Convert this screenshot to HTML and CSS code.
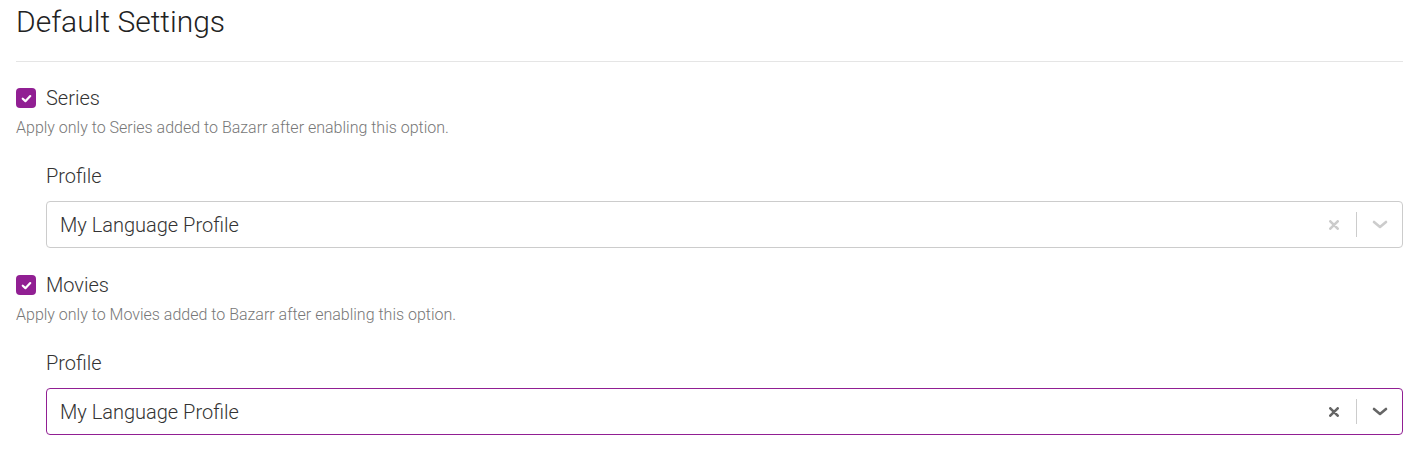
FILE: index.html
```html
<!DOCTYPE html>
<html lang="en">
<head>
<meta charset="utf-8">
<title>Default Settings</title>
<link rel="stylesheet" href="styles.css">
</head>
<body>
<main class="page">
  <header class="header">
    <h1 class="title">Default Settings</h1>
  </header>

  <section class="group">
    <label class="check-row">
      <span class="checkbox">
        <svg viewBox="0 0 10 10" width="11" height="11"><path d="M1.6 5.2 L4 7.4 L8.4 2.8" fill="none" stroke="#fff" stroke-width="2" stroke-linecap="round" stroke-linejoin="round"/></svg>
      </span>
      <span class="check-label">Series</span>
    </label>
    <p class="desc">Apply only to Series added to Bazarr after enabling this option.</p>
    <div class="field">
      <div class="field-label">Profile</div>
      <div class="select">
        <span class="select-value">My Language Profile</span>
        <span class="indicators">
          <span class="ind">
            <svg viewBox="0 0 10 10" width="10" height="10"><path d="M1.3 1.3 L8.7 8.7 M8.7 1.3 L1.3 8.7" stroke="currentColor" stroke-width="2.6" stroke-linecap="round"/></svg>
          </span>
          <span class="sep"></span>
          <span class="ind">
            <svg viewBox="0 0 16 9" width="16" height="9"><path d="M2 2 L8 7 L14 2" fill="none" stroke="currentColor" stroke-width="2.6" stroke-linecap="round" stroke-linejoin="round"/></svg>
          </span>
        </span>
      </div>
    </div>
  </section>

  <section class="group">
    <label class="check-row">
      <span class="checkbox">
        <svg viewBox="0 0 10 10" width="11" height="11"><path d="M1.6 5.2 L4 7.4 L8.4 2.8" fill="none" stroke="#fff" stroke-width="2" stroke-linecap="round" stroke-linejoin="round"/></svg>
      </span>
      <span class="check-label">Movies</span>
    </label>
    <p class="desc">Apply only to Movies added to Bazarr after enabling this option.</p>
    <div class="field">
      <div class="field-label">Profile</div>
      <div class="select focused">
        <span class="select-value">My Language Profile</span>
        <span class="indicators">
          <span class="ind">
            <svg viewBox="0 0 10 10" width="10" height="10"><path d="M1.3 1.3 L8.7 8.7 M8.7 1.3 L1.3 8.7" stroke="currentColor" stroke-width="2.6" stroke-linecap="round"/></svg>
          </span>
          <span class="sep"></span>
          <span class="ind">
            <svg viewBox="0 0 16 9" width="16" height="9"><path d="M2 2 L8 7 L14 2" fill="none" stroke="currentColor" stroke-width="2.6" stroke-linecap="round" stroke-linejoin="round"/></svg>
          </span>
        </span>
      </div>
    </div>
  </section>
</main>
</body>
</html>
```

FILE: styles.css
```css
* { box-sizing: border-box; }

html, body {
  margin: 0;
  background: #fff;
}

body {
  font-family: Roboto, "Liberation Sans", sans-serif;
  font-weight: 300;
  color: #333;
}

.page {
  padding: 0 17px 0 16px;
}

.header {
  padding-top: 4px;
  padding-bottom: 21px;
  border-bottom: 1px solid #e5e5e5;
}

.title {
  margin: 0;
  font-size: 30px;
  line-height: 36px;
  font-weight: 300;
  color: #222;
}

.group {
  display: flex;
  flex-direction: column;
}

.group:first-of-type { margin-top: 24px; }
.group + .group { margin-top: 25px; }

.check-row {
  display: flex;
  align-items: center;
  height: 24px;
  gap: 10px;
}

.checkbox {
  width: 20px;
  height: 20px;
  border-radius: 4px;
  background: #911f93;
  display: flex;
  align-items: center;
  justify-content: center;
}

.check-label {
  font-size: 20px;
  line-height: 24px;
  color: #333;
}

.desc {
  margin: 7px 0 0;
  font-size: 16px;
  line-height: 22px;
  color: #777;
}

.field {
  padding-left: 30px;
  margin-top: 24px;
  display: flex;
  flex-direction: column;
  gap: 12px;
}

.field-label {
  font-size: 20px;
  line-height: 26px;
  color: #333;
}

.select {
  height: 47px;
  border: 1px solid #ccc;
  border-radius: 4px;
  display: flex;
  align-items: center;
  padding-left: 13px;
}

.select.focused {
  border-color: #911f93;
}

.select-value {
  flex: 1;
  font-size: 20px;
  color: #333;
}

.indicators {
  display: flex;
  align-items: center;
  color: #ccc;
}

.select.focused .indicators { color: #666; }

.ind {
  display: flex;
  align-items: center;
  justify-content: center;
  width: 45px;
}

.sep {
  width: 1px;
  height: 25px;
  background: #ccc;
}
```
